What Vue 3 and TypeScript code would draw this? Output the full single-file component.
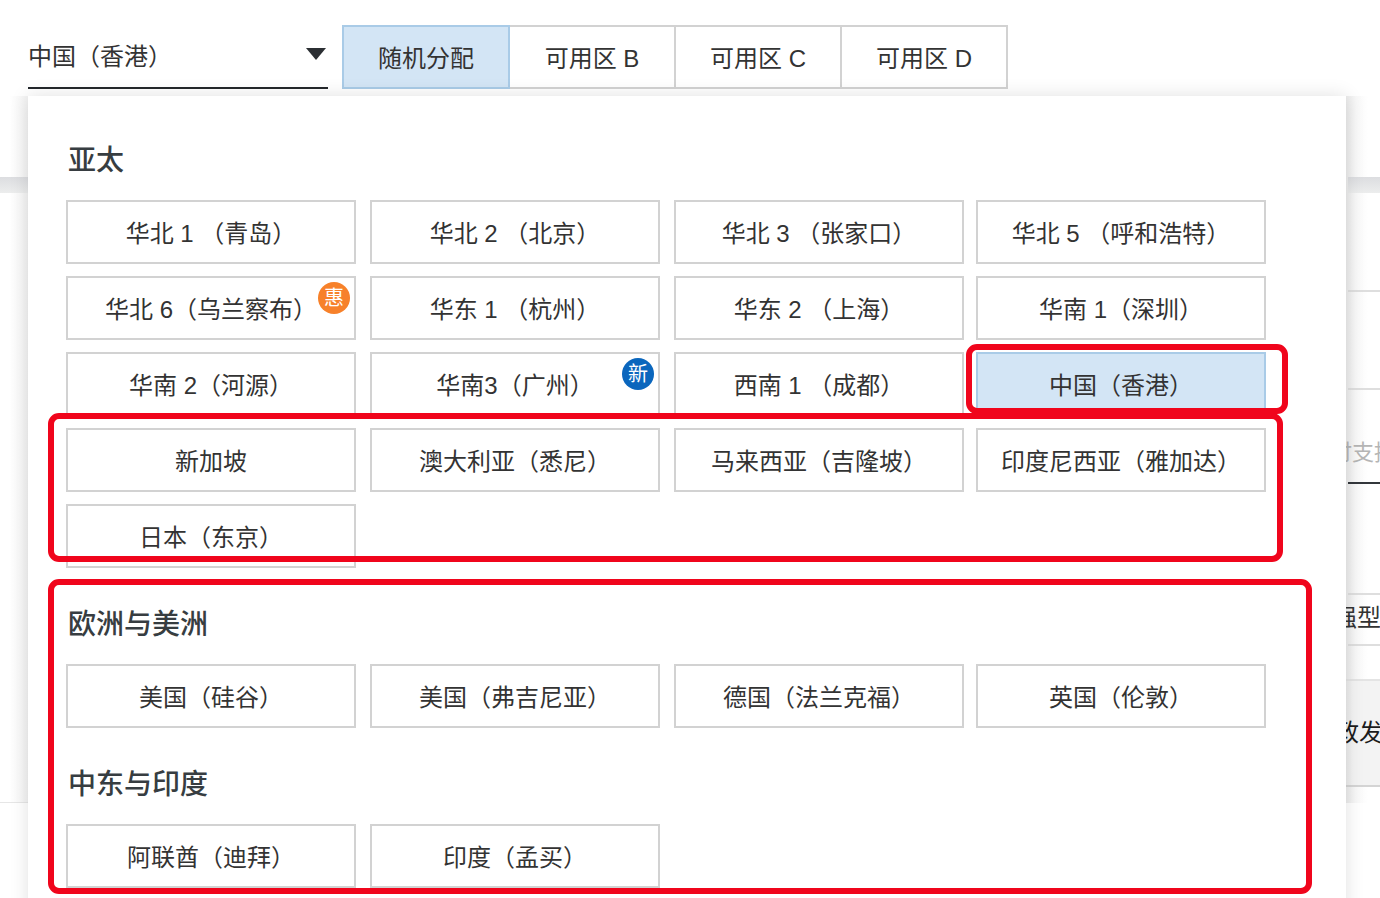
<script setup lang="ts">
interface Region { name: string; active?: boolean; badge?: { text: string; kind: string } }
interface Group { title: string; items: Region[] }

const tabs = ['随机分配', '可用区 B', '可用区 C', '可用区 D']

const groups: Group[] = [
  {
    title: '亚太',
    items: [
      { name: '华北 1 （青岛）' },
      { name: '华北 2 （北京）' },
      { name: '华北 3 （张家口）' },
      { name: '华北 5 （呼和浩特）' },
      { name: '华北 6（乌兰察布）', badge: { text: '惠', kind: 'orange' } },
      { name: '华东 1 （杭州）' },
      { name: '华东 2 （上海）' },
      { name: '华南 1（深圳）' },
      { name: '华南 2（河源）' },
      { name: '华南3（广州）', badge: { text: '新', kind: 'blue' } },
      { name: '西南 1 （成都）' },
      { name: '中国（香港）', active: true },
      { name: '新加坡' },
      { name: '澳大利亚（悉尼）' },
      { name: '马来西亚（吉隆坡）' },
      { name: '印度尼西亚（雅加达）' },
      { name: '日本（东京）' }
    ]
  },
  {
    title: '欧洲与美洲',
    items: [
      { name: '美国（硅谷）' },
      { name: '美国（弗吉尼亚）' },
      { name: '德国（法兰克福）' },
      { name: '英国（伦敦）' }
    ]
  },
  {
    title: '中东与印度',
    items: [{ name: '阿联酋（迪拜）' }, { name: '印度（孟买）' }]
  }
]
</script>

<template>
  <div class="page">
    <header class="top">
      <div class="select">
        <span>中国（香港）</span>
        <svg class="caret" width="20" height="12" viewBox="0 0 20 12"><path d="M0 0H20L10 12Z" fill="#2b2f33" /></svg>
      </div>
      <div class="tabs">
        <div v-for="(t, i) in tabs" :key="t" class="tab" :class="{ on: i === 0 }">{{ t }}</div>
      </div>
    </header>

    <div class="under">
      <div class="side left">
        <div class="bar"></div>
      </div>
      <div class="side right">
        <div class="bar"></div>
        <div class="rule r1"></div>
        <div class="rule r2"></div>
        <div class="hint">时支持</div>
        <div class="rule dark"></div>
        <div class="rule r3"></div>
        <div class="strong">强型</div>
        <div class="rule r4"></div>
        <div class="cta">政发</div>
      </div>
    </div>

    <section class="panel">
      <div v-for="g in groups" :key="g.title" class="group">
        <h3>{{ g.title }}</h3>
        <div class="grid">
          <div v-for="r in g.items" :key="r.name" class="cell" :class="{ active: r.active }">
            <span class="label">{{ r.name }}</span>
            <span v-if="r.badge" class="badge" :class="r.badge.kind">{{ r.badge.text }}</span>
          </div>
        </div>
      </div>
    </section>

    <div class="mark m1"></div>
    <div class="mark m2"></div>
    <div class="mark m3"></div>
  </div>
</template>

<style>
html, body { margin: 0; background: #fff; }
</style>

<style scoped>
.page {
  position: relative;
  width: 1380px;
  height: 898px;
  overflow: hidden;
  background: #fff;
  color: #333;
  font-family: "Liberation Sans", "Noto Sans CJK SC", sans-serif;
}
.top {
  display: flex;
  gap: 14px;
  padding: 25px 0 0 28px;
  height: 71px;
}
.select {
  width: 300px;
  height: 64px;
  box-sizing: border-box;
  border-bottom: 2px solid #23272b;
  display: flex;
  justify-content: space-between;
  align-items: center;
  padding: 0 2px 0 0;
  font-size: 24px;
}
.select span { margin-top: -4px; }
.caret { margin-top: -4px; }
.tabs { display: flex; height: 64px; }
.tab {
  width: 166px;
  height: 64px;
  box-sizing: border-box;
  border: 2px solid #d2d2d2;
  border-left: 0;
  display: flex;
  align-items: center;
  justify-content: center;
  padding-bottom: 2px;
  font-size: 24px;
}
.tab:first-child { width: 168px; border-left: 2px solid #a9cbe7; }
.tab.on {
  background: #d3e5f5;
  border-color: #a9cbe7;
}
.under {
  display: flex;
  justify-content: space-between;
  height: 707px;
}
.side { position: relative; }
.left {
  width: 28px;
  height: 707px;
  padding-top: 81px;
  box-sizing: border-box;
  border-bottom: 1px solid #e6e6e6;
  background: linear-gradient(to right, #fff 0, #fff 10px, #f3f3f3 28px);
}
.right {
  width: 34px;
  height: 707px;
  padding-top: 81px;
  box-sizing: border-box;
  background: linear-gradient(to right, #ececec 0, #f8f8f8 10px, #fff 22px);
  display: flex;
  flex-direction: column;
  overflow: hidden;
}
.bar {
  height: 16px;
  flex: none;
  background: linear-gradient(to bottom, #dcdde0, #eceded);
}
.right .bar { margin-left: 2px; }
.rule { height: 2px; margin-left: 2px; background: #dedede; flex: none; }
.r1 { margin-top: 97px; }
.r2 { margin-top: 96px; }
.hint {
  margin-top: 46px;
  height: 34px;
  line-height: 34px;
  font-size: 22px;
  color: #b5b5b5;
  white-space: nowrap;
  margin-left: -16px;
  flex: none;
}
.rule.dark { background: #33373b; margin-top: 12px; }
.r3 { margin-top: 109px; }
.strong {
  margin-top: 4px;
  height: 38px;
  line-height: 38px;
  font-size: 24px;
  white-space: nowrap;
  margin-left: -13px;
  flex: none;
}
.r4 { margin-top: 7px; }
.cta {
  margin-top: 33px;
  height: 104px;
  flex: none;
  border-top: 2px solid #e4e4e4;
  border-bottom: 2px solid #d4d4d4;
  line-height: 104px;
  font-size: 24px;
  color: #1c1c1c;
  white-space: nowrap;
  margin-left: -11px;
  background: linear-gradient(to right, #dedede, #f3f3f3 40%);
}
.panel {
  position: absolute;
  left: 28px;
  top: 96px;
  width: 1318px;
  height: 840px;
  box-sizing: border-box;
  padding: 40px 0 0 38px;
  background: #fff;
  box-shadow: 0 0 18px rgba(0, 0, 0, 0.12);
  display: flex;
  flex-direction: column;
  gap: 32px;
}
h3 {
  margin: 0 0 16px;
  padding: 1px 0 0 2px;
  box-sizing: border-box;
  height: 48px;
  line-height: 48px;
  font-size: 28px;
  font-weight: 500;
  color: #373d41;
}
.grid {
  display: grid;
  grid-template-columns: 304px 304px 302px 290px;
  row-gap: 12px;
}
.cell {
  position: relative;
  width: 290px;
  height: 64px;
  box-sizing: border-box;
  border: 2px solid #d2d2d2;
  display: flex;
  align-items: center;
  justify-content: center;
  padding: 0 0 2px 0;
  font-size: 24px;
  white-space: pre;
}
.cell.active {
  background: #d3e5f5;
  border-color: #a9cbe7;
}
.badge {
  position: absolute;
  right: 4px;
  top: 4px;
  width: 32px;
  height: 32px;
  border-radius: 50%;
  color: #fff;
  font-size: 20px;
  line-height: 32px;
  text-align: center;
}
.orange { background: #f7812a; }
.blue { background: #0a66bd; }
.mark {
  position: absolute;
  box-sizing: border-box;
  border: 6px solid #f0051c;
  border-radius: 11px;
  pointer-events: none;
}
.m1 { left: 966px; top: 344px; width: 322px; height: 70px; }
.m2 { left: 48px; top: 413px; width: 1235px; height: 149px; }
.m3 { left: 48px; top: 579px; width: 1264px; height: 315px; }
</style>
